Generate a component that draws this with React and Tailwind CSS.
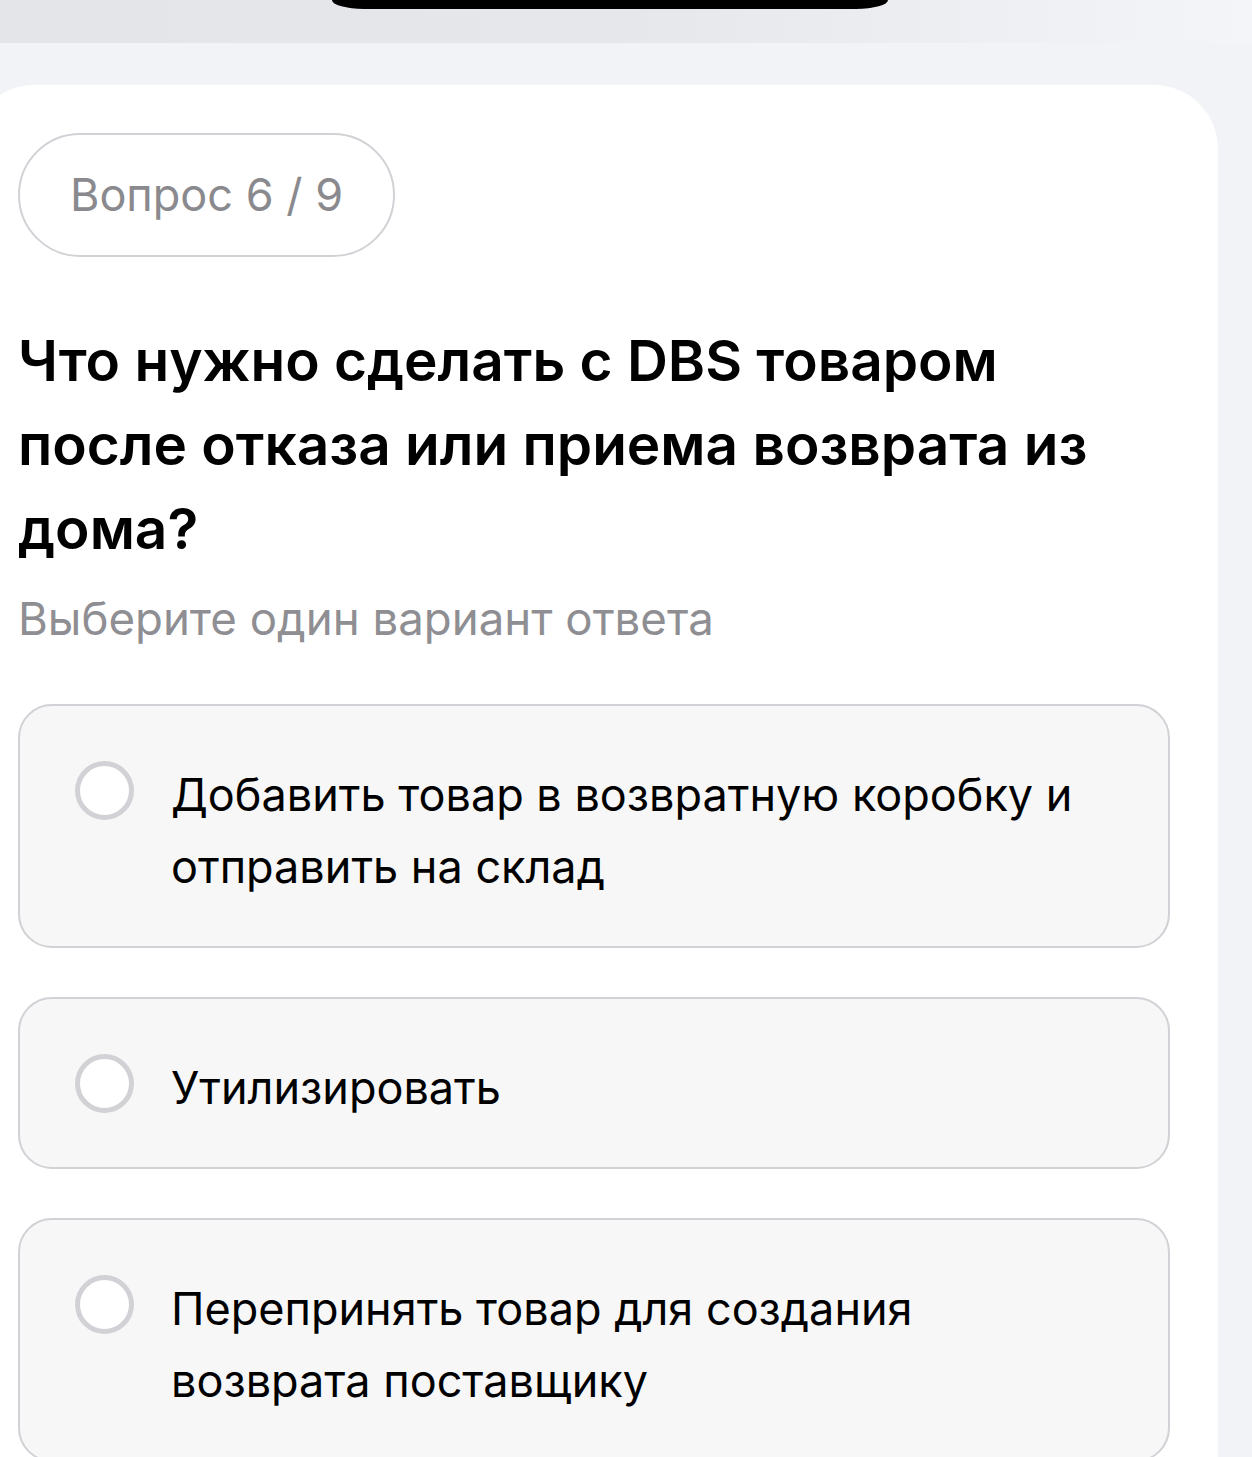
const OPTIONS = [
  'Добавить товар в возвратную коробку и отправить на склад',
  'Утилизировать',
  'Перепринять товар для создания возврата поставщику',
];

function Radio() {
  return (
    <span className="shrink-0 mt-[2px] w-[59px] h-[59px] rounded-full border-[5px] border-[#d1d1d6] bg-white" />
  );
}

function Option({ text }) {
  return (
    <button className="w-full flex items-start gap-[37px] text-left bg-[#f7f7f8] border-2 border-[#d1d1d6] rounded-[34px] pl-[55px] pr-[78px] pt-[53px] pb-[43px]">
      <Radio />
      <span className="text-[45px] leading-[72px] text-black">{text}</span>
    </button>
  );
}

export default function App() {
  return (
    <div
      className="min-h-screen bg-[#f2f3f7] overflow-hidden"
      style={{ fontFamily: 'Inter, "Noto Sans", sans-serif' }}
    >
      {/* status bar */}
      <div className="h-[43px] flex justify-center items-start pr-[32px] bg-gradient-to-r from-[#e4e5e9] via-[#e6e7ea] to-[#f4f5f8]">
        <div className="w-[556px] h-[9px] bg-black rounded-bl-[32px_9px] rounded-br-[32px_9px]" />
      </div>

      <div className="pt-[42px]">
        <div className="-ml-[30px] w-[1248px] min-h-[1400px] bg-white rounded-t-[64px] px-[48px] pt-[48px] pb-[40px]">
          <div className="inline-flex items-center justify-center h-[124px] w-[377px] rounded-full border-2 border-[#d1d1d6] text-[45px] text-[#8a8a8e]">
            Вопрос 6 / 9
          </div>

          <h1 className="mt-[62px] text-[56.7px] leading-[84px] font-semibold text-black">
            Что нужно сделать с DBS товаром после отказа или приема возврата из дома?
          </h1>

          <p className="mt-[18px] text-[45.6px] leading-[60px] text-[#8e8e93]">
            Выберите один вариант ответа
          </p>

          <div className="mt-[55px] flex flex-col gap-[49px]">
            {OPTIONS.map((t) => (
              <Option key={t} text={t} />
            ))}
          </div>
        </div>
      </div>
    </div>
  );
}
